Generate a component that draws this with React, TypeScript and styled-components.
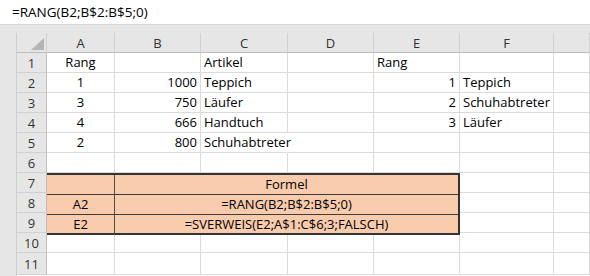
import React from "react";
import styled, { createGlobalStyle } from "styled-components";

const Global = createGlobalStyle`
  html, body { margin: 0; padding: 0; background: #ffffff; }
  body { font-family: "Open Sans", "Liberation Sans", sans-serif; font-size: 13px; color: #000; }
  * { box-sizing: border-box; }
`;

const Page = styled.div`
  width: 590px;
  height: 276px;
  overflow: hidden;
  display: flex;
  flex-direction: column;
  background: #e6e6e6;
`;

const FormulaBar = styled.div`
  height: 25px;
  flex: none;
  background: #ffffff;
  border-bottom: 1px solid #d6d6d6;
  padding-left: 12px;
  display: flex;
  align-items: center;
  font-size: 13.5px;
  color: #000;
`;

const SheetArea = styled.div`
  flex: 1;
  padding: 8px 0 0 16px;
  background: #e6e6e6;
`;

const Grid = styled.div`
  display: grid;
  grid-template-columns: 30px 68px 86px 87px 86px 86px 94px 1fr;
  grid-template-rows: repeat(9, 20px) 20px 20px 22px 20px 20px;
  background: #ffffff;
  border-left: 1px solid #cfcfcf;
`;

const ColHead = styled.div`
  background: #e6e6e6;
  border-right: 1px solid #d0d0d0;
  border-bottom: 1px solid #bdbdbd;
  display: flex;
  align-items: center;
  justify-content: center;
  color: #333;
  padding-top: 1px;
`;

const Corner = styled(ColHead)`
  justify-content: flex-end;
  align-items: flex-end;
  padding: 0 2px 2px 0;
`;

const RowHead = styled.div`
  background: #e6e6e6;
  border-right: 1px solid #bdbdbd;
  border-bottom: 1px solid #d0d0d0;
  display: flex;
  align-items: center;
  justify-content: center;
  color: #333;
`;

type Align = "left" | "right" | "center";

const Cell = styled.div<{ $align?: Align; $spill?: boolean }>`
  border-right: 1px solid ${(p) => (p.$spill ? "transparent" : "#dadada")};
  border-bottom: 1px solid #dadada;
  padding: 0 3px;
  line-height: 19px;
  white-space: nowrap;
  overflow: visible;
  position: relative;
  z-index: ${(p) => (p.$spill ? 1 : 0)};
  text-align: ${(p) => p.$align ?? "left"};
`;

const FormulaBlock = styled.div`
  grid-column: 2 / 7;
  grid-row: 8 / 11;
  display: grid;
  grid-template-columns: 68px 1fr;
  grid-template-rows: 20px 20px 1fr;
  background: #f8cbad;
  border-top: 2px solid #343434;
  border-right: 2px solid #343434;
  border-bottom: 2px solid #343434;
  height: 62px;
  position: relative;
  z-index: 2;
`;

const BlockCell = styled.div<{ $last?: boolean; $first?: boolean }>`
  border-bottom: ${(p) => (p.$last ? "none" : "1px solid #3c3c3c")};
  border-right: ${(p) => (p.$first ? "1px solid #5a4a42" : "none")};
  text-align: center;
  line-height: 19px;
  white-space: nowrap;
`;

const cols = ["A", "B", "C", "D", "E", "F", ""];

type Row = { n: number; cells: [string, Align?][]; spill?: number };

const rows: Row[] = [
  { n: 1, cells: [["Rang", "center"], [""], ["Artikel"], [""], ["Rang"], [""], [""]] },
  { n: 2, cells: [["1", "center"], ["1000", "right"], ["Teppich"], [""], ["1", "right"], ["Teppich"], [""]] },
  { n: 3, cells: [["3", "center"], ["750", "right"], ["Läufer"], [""], ["2", "right"], ["Schuhabtreter"], [""]] },
  { n: 4, cells: [["4", "center"], ["666", "right"], ["Handtuch"], [""], ["3", "right"], ["Läufer"], [""]] },
  { n: 5, cells: [["2", "center"], ["800", "right"], ["Schuhabtreter"], [""], [""], [""], [""]], spill: 2 },
  { n: 6, cells: [[""], [""], [""], [""], [""], [""], [""]] },
];

const blockRows = [
  ["", "Formel"],
  ["A2", "=RANG(B2;B$2:B$5;0)"],
  ["E2", "=SVERWEIS(E2;A$1:C$6;3;FALSCH)"],
];

const CornerMark = () => (
  <svg width="13" height="12" viewBox="0 0 13 12">
    <polygon points="13,0 13,12 0,12" fill="#b4b4b4" />
  </svg>
);

export default function App() {
  return (
    <Page>
      <Global />
      <FormulaBar>=RANG(B2;B$2:B$5;0)</FormulaBar>
      <SheetArea>
        <Grid>
          <Corner>
            <CornerMark />
          </Corner>
          {cols.map((c, i) => (
            <ColHead key={i}>{c}</ColHead>
          ))}
          {rows.map((r) => (
            <React.Fragment key={r.n}>
              <RowHead>{r.n}</RowHead>
              {r.cells.map(([t, a], i) => (
                <Cell key={i} $align={a} $spill={r.spill === i}>
                  {t}
                </Cell>
              ))}
            </React.Fragment>
          ))}
          <FormulaBlock>
            {blockRows.map(([a, b], i) => (
              <React.Fragment key={i}>
                <BlockCell $first $last={i === 2}>{a}</BlockCell>
                <BlockCell $last={i === 2}>{b}</BlockCell>
              </React.Fragment>
            ))}
          </FormulaBlock>
          {[7, 8, 9].map((n) => (
            <React.Fragment key={n}>
              <RowHead style={{ gridRow: n + 1, gridColumn: 1 }}>{n}</RowHead>
              <Cell style={{ gridRow: n + 1, gridColumn: 7 }} />
              <Cell style={{ gridRow: n + 1, gridColumn: 8 }} />
            </React.Fragment>
          ))}
          {[10, 11].map((n) => (
            <React.Fragment key={n}>
              <RowHead>{n}</RowHead>
              {cols.map((_, i) => (
                <Cell key={i} />
              ))}
            </React.Fragment>
          ))}
        </Grid>
      </SheetArea>
    </Page>
  );
}
